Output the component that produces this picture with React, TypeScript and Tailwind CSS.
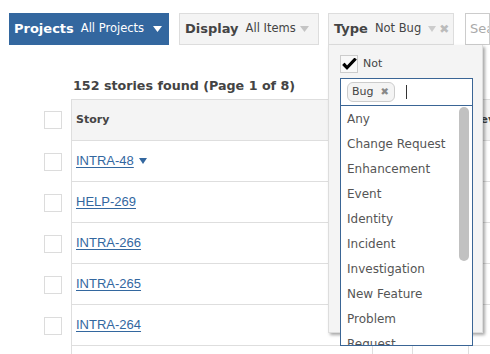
import React from 'react';

const stories = ['INTRA-48', 'HELP-269', 'INTRA-266', 'INTRA-265', 'INTRA-264', ''];

const types = [
  'Any',
  'Change Request',
  'Enhancement',
  'Event',
  'Identity',
  'Incident',
  'Investigation',
  'New Feature',
  'Problem',
  'Request',
];

const Caret = ({ color, w = 9, h = 6 }: { color: string; w?: number; h?: number }) => (
  <svg width={w} height={h} viewBox={`0 0 ${w} ${h}`}>
    <path d={`M0 0 L${w} 0 L${w / 2} ${h} Z`} fill={color} />
  </svg>
);

const Box = () => <div className="w-[18px] h-[18px] border border-[#dcdcdc] bg-white" />;

const TableRow = ({ story, header }: { story?: string; header?: boolean }) => (
  <div className="flex">
    <div className="w-[71px] shrink-0 flex items-center pl-[44px]">{story !== '' && <Box />}</div>
    <div
      className={`flex-1 flex border-l border-b border-[#dedede] ${
        header ? 'h-[42px] border-t bg-[#f4f4f4]' : 'h-[41px] bg-white'
      }`}
    >
      <div className="w-[300px] shrink-0 flex items-center pl-[4px]">
        {header ? (
          <span className="text-[11px] font-bold text-[#444]">Story</span>
        ) : story ? (
          <span className="flex items-center gap-[5px]">
            <a className="font-['Liberation_Sans',Arial,sans-serif] text-[13px] text-[#33679f] underline underline-offset-2">
              {story}
            </a>
            {story === 'INTRA-48' && <Caret color="#33679f" w={8} h={6} />}
          </span>
        ) : null}
      </div>
      <div className="w-[40px] shrink-0 border-l border-[#dedede]" />
      <div className="w-[56px] shrink-0 border-l border-[#dedede]" />
      <div className="flex-1 border-l border-[#dedede] flex items-center pl-[3px]">
        {header && <span className="text-[11px] font-bold text-[#444]">Rev</span>}
      </div>
    </div>
  </div>
);

export default function App() {
  return (
    <div className="relative w-[490px] h-[354px] overflow-hidden bg-white font-['DejaVu_Sans',Verdana,sans-serif] text-[#444]">
      {/* Toolbar */}
      <div className="flex items-center pt-[13px] pl-[9px]">
        <div className="w-[160px] h-[32px] bg-[#33679f] flex items-center pl-[5px] pr-[7px] text-white">
          <span className="text-[13px] font-bold">Projects</span>
          <span className="text-[11.5px] ml-[7px]">All Projects</span>
          <span className="ml-auto">
            <Caret color="#ffffff" />
          </span>
        </div>
        <div className="ml-[10px] w-[140px] h-[32px] bg-[#f4f4f4] border border-[#dddddd] flex items-center pl-[5px] pr-[9px]">
          <span className="text-[13px] font-bold text-[#444]">Display</span>
          <span className="text-[11.5px] ml-[7px] text-[#444]">All Items</span>
          <span className="ml-auto">
            <Caret color="#c4c4c4" />
          </span>
        </div>
        <div className="ml-[9px] w-[126px] h-[32px] bg-[#f4f4f4] border border-[#dddddd] flex items-center pl-[5px]">
          <span className="text-[13px] font-bold text-[#444]">Type</span>
          <span className="text-[11.5px] ml-[7px] text-[#444]">Not Bug</span>
          <span className="ml-[7px]">
            <Caret color="#cccccc" w={8} h={6} />
          </span>
          <span className="ml-[3px] text-[12px] font-bold text-[#bbbbbb] leading-none">✖</span>
        </div>
        <div className="ml-[11px] flex-1 h-[32px] border border-[#cccccc] flex items-center pl-[4px] text-[13px] text-[#aaaaaa] whitespace-nowrap overflow-hidden">
          Search
        </div>
      </div>

      {/* Results */}
      <div className="pl-[73px] pt-[32px] h-[22px] box-content text-[12.7px] font-bold text-[#444] leading-[18px] whitespace-nowrap">
        152 stories found (Page 1 of 8)
      </div>
      <div>
        <TableRow header />
        {stories.map((s, i) => (
          <TableRow key={i} story={s} />
        ))}
      </div>

      {/* Type dropdown */}
      <div className="absolute left-[328px] top-[45px] w-[155px] h-[288px] bg-[#f4f4f4] border-x border-b border-[#dddddd] shadow-[2px_2px_3px_rgba(0,0,0,0.35)] pl-[11px]">
        <div className="flex items-center mt-[10px] h-[18px]">
          <div className="w-[18px] h-[18px] border border-[#cccccc] bg-[#f8f8f8] flex items-center justify-center">
            <svg width="15" height="13" viewBox="0 0 15 13">
              <path d="M1 7 L5 11 L14 1.5 L12.5 0.5 L5 8.5 L2.5 5.5 Z" fill="#000" stroke="#000" strokeWidth="1.2" strokeLinejoin="round" />
            </svg>
          </div>
          <span className="ml-[5px] text-[11px] text-[#444]">Not</span>
        </div>
        <div className="mt-[5px] w-[133px] h-[28px] bg-white border border-[#3a6595] flex items-center pl-[6px]">
          <div className="h-[20px] pl-[4px] pr-[5px] flex items-center rounded-[6px] border border-[#cccccc] bg-[#f4f4f4]">
            <span className="text-[11px] text-[#444]">Bug</span>
            <span className="ml-[7px] text-[10px] font-bold text-[#888] leading-none">✖</span>
          </div>
          <div className="ml-[11px] w-px h-[14px] bg-[#333]" />
        </div>
        <div className="relative w-[133px] h-[241px] -mt-px bg-white border border-[#3a6595] overflow-hidden">
          {types.map((t) => (
            <div key={t} className="h-[25px] flex items-center pl-[6px] text-[12px] text-[#555] whitespace-nowrap">
              {t}
            </div>
          ))}
          <div className="absolute right-[3px] top-px w-[10px] h-[154px] rounded-full bg-[#c1c1c1]" />
        </div>
      </div>
    </div>
  );
}
